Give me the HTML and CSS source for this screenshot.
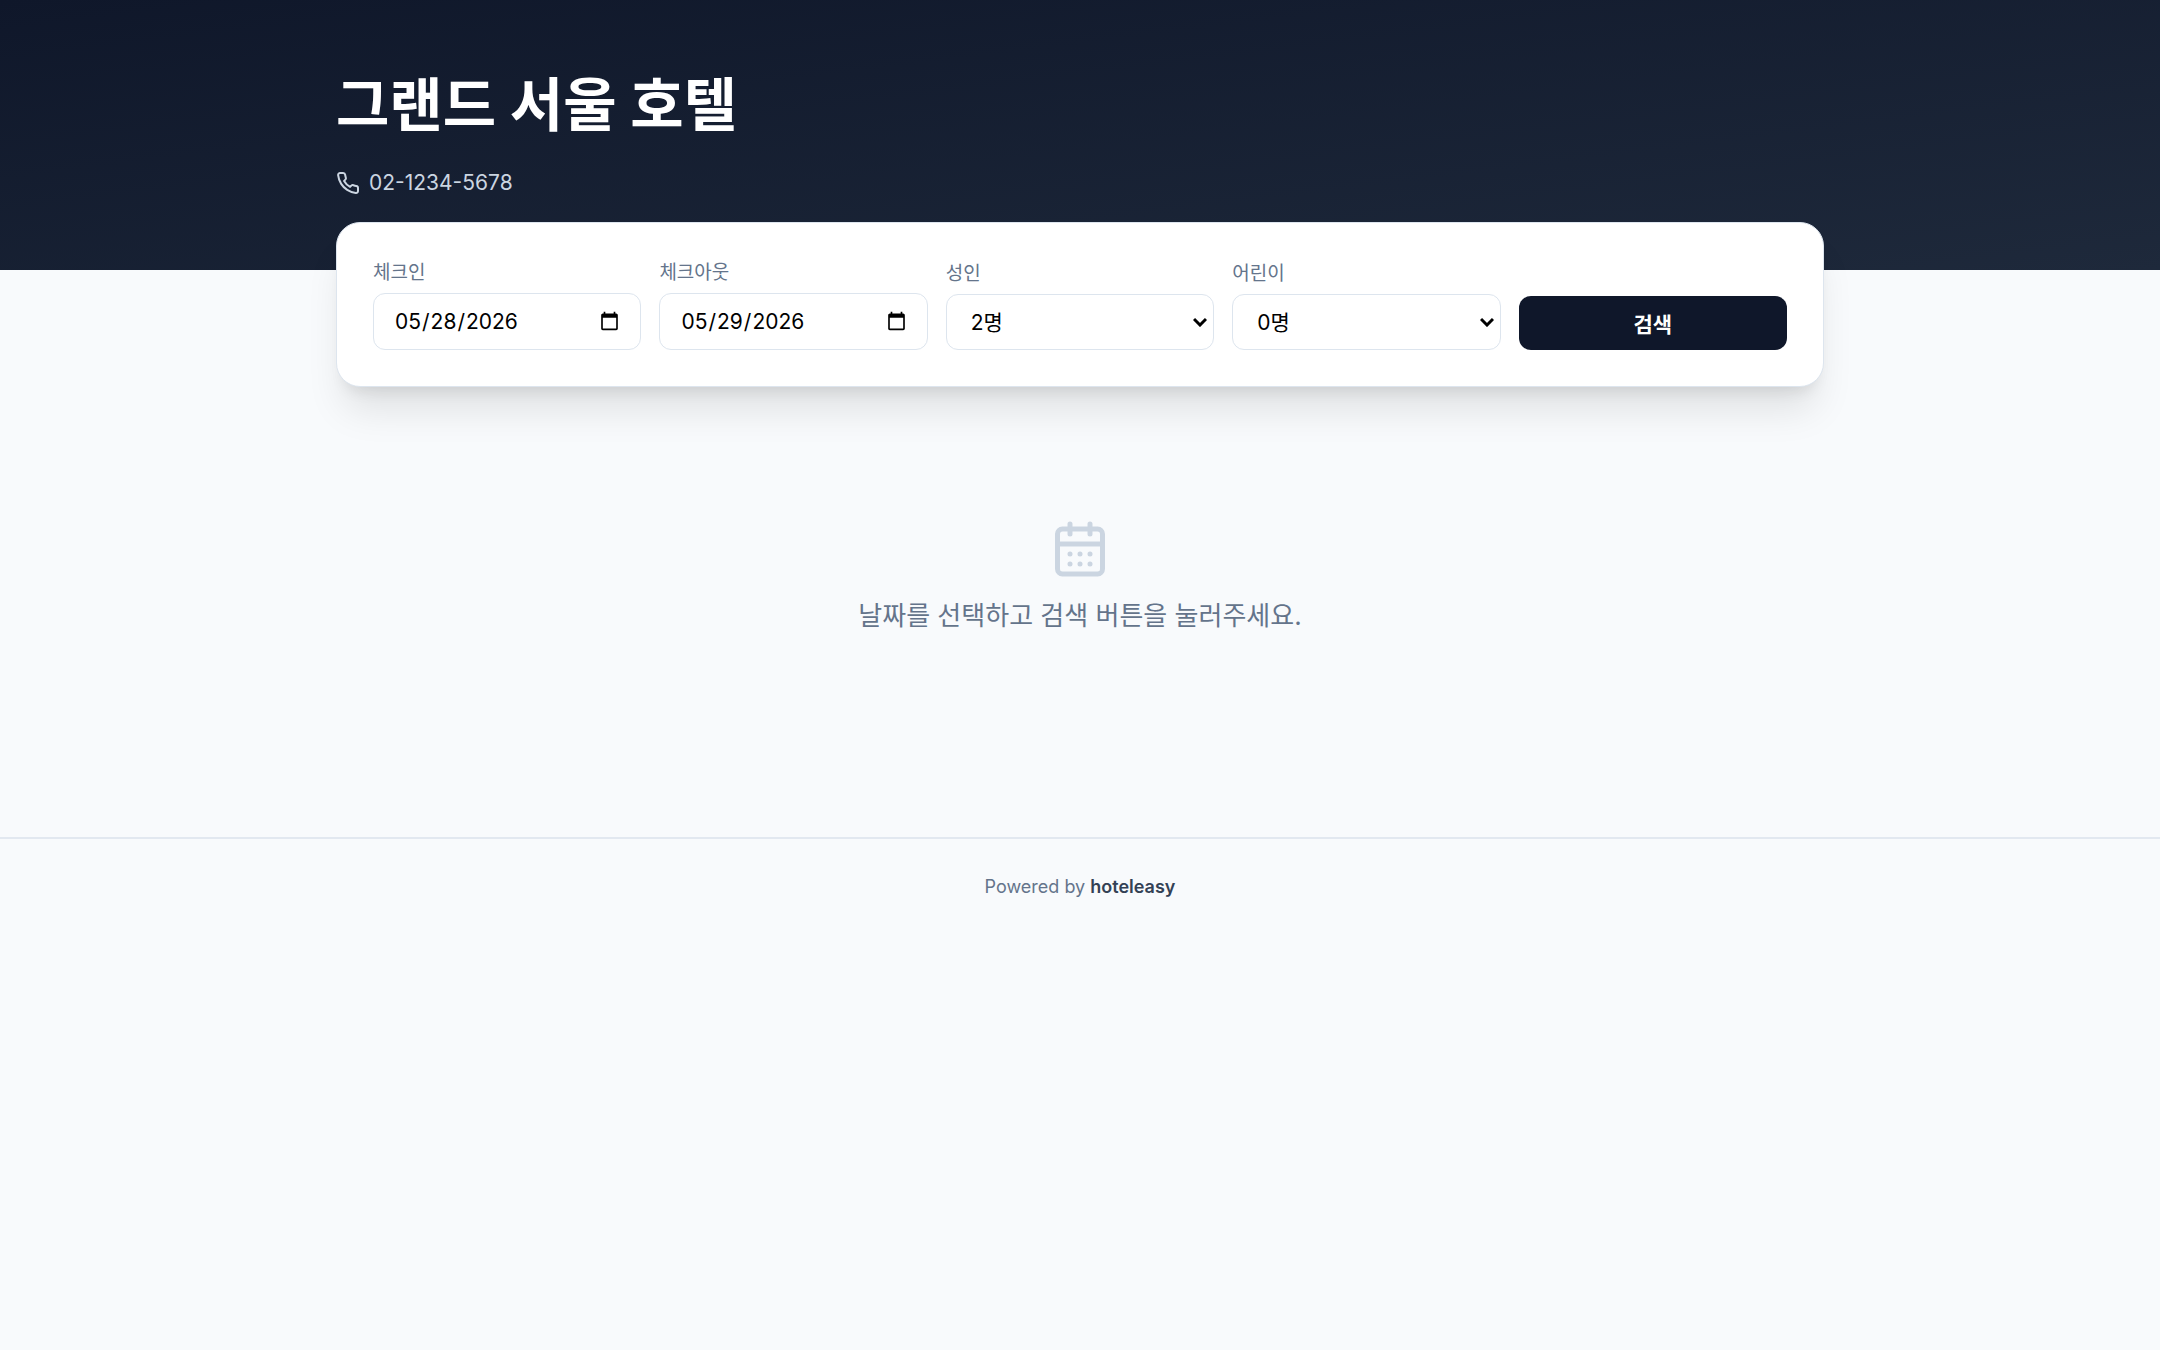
FILE: index.html
```
<!DOCTYPE html>
<html lang="ko">

<head>
    <meta charset="UTF-8">
    <meta name="viewport" content="width=device-width, initial-scale=1.0">
    <title>그랜드 서울 호텔</title>
    <link rel="stylesheet" href="styles.css">
</head>

<body>
    <header class="hero">
        <div class="container">
            <h1 class="hotel-name">그랜드 서울 호텔</h1>
            <p class="phone">
                <svg class="phone-icon" viewBox="0 0 24 24" aria-hidden="true">
                    <path d="M22 16.92v3a2 2 0 0 1-2.18 2 19.79 19.79 0 0 1-8.63-3.07 19.5 19.5 0 0 1-6-6 19.79 19.79 0 0 1-3.07-8.67A2 2 0 0 1 4.11 2h3a2 2 0 0 1 2 1.72 12.84 12.84 0 0 0 .7 2.81 2 2 0 0 1-.45 2.11L8.09 9.91a16 16 0 0 0 6 6l1.27-1.27a2 2 0 0 1 2.11-.45 12.84 12.84 0 0 0 2.81.7A2 2 0 0 1 22 16.92z" />
                </svg>
                <span>02-1234-5678</span>
            </p>
        </div>
    </header>

    <main class="container">
        <form class="search-card">
            <div class="field">
                <label for="checkin">체크인</label>
                <input class="control" type="date" id="checkin" value="2026-05-28">
            </div>
            <div class="field">
                <label for="checkout">체크아웃</label>
                <input class="control" type="date" id="checkout" value="2026-05-29">
            </div>
            <div class="field">
                <label for="adults">성인</label>
                <select class="control select" id="adults">
                    <option>1명</option>
                    <option selected>2명</option>
                    <option>3명</option>
                    <option>4명</option>
                </select>
            </div>
            <div class="field">
                <label for="children">어린이</label>
                <select class="control select" id="children">
                    <option selected>0명</option>
                    <option>1명</option>
                    <option>2명</option>
                    <option>3명</option>
                </select>
            </div>
            <button class="search-button" type="button">검색</button>
        </form>

        <section class="empty">
            <svg class="empty-icon" viewBox="0 0 24 24" aria-hidden="true">
                <path d="M8 2v4M16 2v4M3 10h18" />
                <rect x="3" y="4" width="18" height="18" rx="2" />
                <path d="M8 14h.01M12 14h.01M16 14h.01M8 18h.01M12 18h.01M16 18h.01" />
            </svg>
            <p>날짜를 선택하고 검색 버튼을 눌러주세요.</p>
        </section>
    </main>

    <footer class="footer">
        Powered by <strong>hoteleasy</strong>
    </footer>
</body>

</html>
```
FILE: styles.css
```
* {
    box-sizing: border-box;
}

body {
    margin: 0;
    background-color: #f8fafc;
    color: #0f172a;
    font-family: Inter, "Noto Sans CJK KR", sans-serif;
    font-size: 21px;
}

h1,
p {
    margin: 0;
}

.container {
    max-width: 1536px;
    margin: 0 auto;
    padding: 0 24px;
}

/* header */
.hero {
    background: linear-gradient(to bottom right, #0f172a, #1e293b);
    padding: 72px 0;
}

.hotel-name {
    color: #fff;
    font-size: 58px;
    font-weight: 700;
    line-height: 66px;
}

.phone {
    display: flex;
    align-items: center;
    gap: 9px;
    margin-top: 30px;
    color: #cbd5e1;
    line-height: 30px;
}

.phone-icon {
    width: 24px;
    height: 24px;
    fill: none;
    stroke: currentColor;
    stroke-width: 2;
    stroke-linecap: round;
    stroke-linejoin: round;
}

/* search form */
.search-card {
    display: grid;
    grid-template-columns: repeat(5, 1fr);
    gap: 18px;
    align-items: end;
    margin-top: -48px;
    padding: 36px;
    background-color: #fff;
    border: 1px solid #dde5ee;
    border-radius: 24px;
    box-shadow: 0 30px 38px -8px rgba(0, 0, 0, 0.1), 0 12px 15px -9px rgba(0, 0, 0, 0.1);
}

.field label {
    display: block;
    margin-bottom: 6px;
    color: #64748b;
    font-size: 19px;
    line-height: 28px;
}

.control {
    display: block;
    width: 100%;
    height: 57px;
    padding: 0 18px 0 20px;
    background-color: #fff;
    border: 1px solid #dde5ee;
    border-radius: 12px;
    color: #000;
    font-family: inherit;
    font-size: 21px;
}

.select {
    height: 56px;
    padding: 0 24px;
    appearance: none;
    background-image: url("data:image/svg+xml,%3Csvg xmlns='http://www.w3.org/2000/svg' viewBox='0 0 14 10' fill='none' stroke='black' stroke-width='3'%3E%3Cpath d='M1 2l6 6 6-6'/%3E%3C/svg%3E");
    background-repeat: no-repeat;
    background-position: right 6px center;
    background-size: 14px 10px;
}

.search-button {
    height: 54px;
    background-color: #0f172a;
    border: 0;
    border-radius: 12px;
    color: #fff;
    font-family: inherit;
    font-size: 21px;
    font-weight: 600;
    cursor: pointer;
}

/* empty state */
.empty {
    padding: 132px 0 202px;
    color: #64748b;
    font-size: 26px;
    line-height: 38px;
    text-align: center;
}

.empty-icon {
    display: block;
    width: 60px;
    height: 60px;
    margin: 0 auto 18px;
    fill: none;
    stroke: #cbd5e1;
    stroke-width: 2;
    stroke-linecap: round;
    stroke-linejoin: round;
}

.footer {
    padding: 36px 0;
    border-top: 2px solid #e2e8f0;
    color: #64748b;
    font-size: 18px;
    line-height: 24px;
    text-align: center;
}

.footer strong {
    color: #334155;
    font-weight: 600;
}
```
